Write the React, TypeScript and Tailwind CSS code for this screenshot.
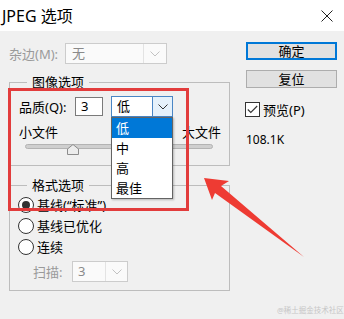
import React from 'react'

// small down chevron used by the combo boxes
function Chevron({ color }: { color: string }) {
  return (
    <svg width="10" height="6" viewBox="0 0 10 6" fill="none">
      <path d="M0.5 0.5 L5 5 L9.5 0.5" stroke={color} strokeWidth="1" />
    </svg>
  )
}

function Radio({ checked, label }: { checked?: boolean; label: string }) {
  return (
    <div className="flex items-center h-[21px] pl-[8px]">
      <span className="w-[16px] h-[16px] rounded-full border border-[#333333] bg-white flex items-center justify-center">
        {checked && <span className="w-[8px] h-[8px] rounded-full bg-[#333333]" />}
      </span>
      <span className="ml-[3px] leading-[18px]">{label}</span>
    </div>
  )
}

function Button({ label, primary }: { label: string; primary?: boolean }) {
  return (
    <div
      className={
        primary
          ? 'w-[91px] h-[18px] bg-[#e1e1e1] border-2 border-[#0078d7] flex items-center justify-center leading-[16px]'
          : 'w-[91px] h-[18px] bg-[#e1e1e1] border border-[#adadad] flex items-center justify-center leading-[16px]'
      }
    >
      {label}
    </div>
  )
}

const qualityItems = ['低', '中', '高', '最佳']

export default function App() {
  return (
    <div className="relative w-[344px] h-[319px] bg-[#f0f0f0] overflow-hidden font-['Noto_Sans','Noto_Sans_CJK_SC',sans-serif] text-[13px] text-black">
      {/* title bar */}
      <div className="h-[31px] bg-white flex items-center justify-between pl-[2px] pr-[11px]">
        <span className="text-[16px] leading-[20px]">JPEG 选项</span>
        <svg width="12" height="12" viewBox="0 0 12 12" fill="none">
          <path d="M0.5 0.5 L11.5 11.5 M11.5 0.5 L0.5 11.5" stroke="#222" strokeWidth="1" />
        </svg>
      </div>

      <div className="flex">
        {/* left column */}
        <div className="w-[230px] pl-[9px] pt-[12px]">
          <div className="flex items-center h-[21px]">
            <span className="w-[56px] text-[#9a9a9a] leading-[18px]">杂边(M):</span>
            <div className="w-[102px] h-[21px] bg-[#fafafa] border border-[#cccccc] flex">
              <span className="flex-1 pl-[6px] text-[#8a8a8a] leading-[19px]">无</span>
              <span className="w-[23px] border-l border-[#e3e3e3] flex items-center justify-center">
                <Chevron color="#c2c2c2" />
              </span>
            </div>
          </div>

          <fieldset className="mt-[9px] w-[221px] border border-[#bdbdbd] pb-[10px]">
            <legend className="ml-[17px] px-[5px] leading-[18px]">图像选项</legend>
            <div className="mt-[5px] h-[21px] flex items-center pl-[9px]">
              <span className="w-[56px] leading-[18px]">品质(Q):</span>
              <div className="w-[28px] h-[19px] bg-white border border-[#7a7a7a] pl-[5px] leading-[17px]">3</div>
              <div className="relative ml-[8px] w-[62px] h-[21px] bg-white border border-[#4a86c5] flex">
                <span className="flex-1 pl-[5px] leading-[19px]">低</span>
                <span className="w-[20px] bg-[#e5f1fb] border-l border-[#4a86c5] flex items-center justify-center">
                  <Chevron color="#333333" />
                </span>
                {/* open dropdown list */}
                <div className="absolute z-10 left-[-1px] top-[20px] w-[62px] bg-white border border-[#646464] shadow-[1px_1px_2px_rgba(0,0,0,0.25)]">
                  {qualityItems.map((item, i) => (
                    <div
                      key={item}
                      className={
                        i === 0
                          ? 'h-[20px] pl-[4px] leading-[20px] bg-[#0078d7] text-white'
                          : 'h-[20px] pl-[4px] leading-[20px]'
                      }
                    >
                      {item}
                    </div>
                  ))}
                </div>
              </div>
            </div>
            <div className="mt-[7px] flex justify-between pl-[9px] pr-[8px] leading-[17px]">
              <span>小文件</span>
              <span>大文件</span>
            </div>
            <div className="relative h-[11px] ml-[15px] w-[188px]">
              <div className="mt-[3px] h-[5px] rounded-full bg-[#cfcfcf] border border-[#b3b3b3]" />
              <svg className="absolute left-[42px] top-0" width="12" height="11" viewBox="0 0 12 11">
                <path d="M0.5 10.5 V5 L6 0.5 L11.5 5 V10.5 Z" fill="#ececec" stroke="#8c8c8c" strokeWidth="1" />
              </svg>
            </div>
          </fieldset>

          <fieldset className="mt-[10px] w-[221px] border border-[#bdbdbd] pb-[8px]">
            <legend className="ml-[17px] px-[5px] leading-[18px]">格式选项</legend>
            <Radio checked label="基线(“标准”)" />
            <Radio label="基线已优化" />
            <Radio label="连续" />
            <div className="mt-[4px] h-[21px] flex items-center pl-[23px]">
              <span className="w-[39px] text-[#9a9a9a] leading-[18px]">扫描:</span>
              <div className="w-[56px] h-[21px] bg-[#fafafa] border border-[#cccccc] flex">
                <span className="flex-1 pl-[5px] text-[#8a8a8a] leading-[19px]">3</span>
                <span className="w-[22px] border-l border-[#e3e3e3] flex items-center justify-center">
                  <Chevron color="#c2c2c2" />
                </span>
              </div>
            </div>
          </fieldset>
        </div>

        {/* right column */}
        <div className="ml-[16px] pt-[11px] w-[92px]">
          <Button label="确定" primary />
          <div className="mt-[10px]">
            <Button label="复位" />
          </div>
          <div className="mt-[14px] -ml-px flex items-center h-[15px]">
            <span className="w-[15px] h-[15px] border border-[#333333] bg-white flex items-center justify-center">
              <svg width="11" height="9" viewBox="0 0 11 9" fill="none">
                <path d="M0.8 4.5 L3.8 7.5 L10.2 1" stroke="#333333" strokeWidth="1.1" />
              </svg>
            </span>
            <span className="ml-[3px] leading-[18px]">预览(P)</span>
          </div>
          <div className="mt-[15px] text-[12px] leading-[16px]">108.1K</div>
        </div>
      </div>

      {/* annotation: red frame */}
      <div className="absolute left-[8px] top-[88px] w-[181px] h-[123px] border-[3px] border-[#e23c3c] pointer-events-none" />

      {/* annotation: arrow */}
      <svg className="absolute left-0 top-0 pointer-events-none" width="344" height="319" viewBox="0 0 344 319">
        <polygon points="204,178 229,181 221,186 304,257 215,193 212,200" fill="#ee3b33" />
      </svg>

      <div className="absolute left-[277px] top-[304px] text-[7.5px] leading-[12px] text-[#c6c6c6]">@稀土掘金技术社区</div>
    </div>
  )
}
